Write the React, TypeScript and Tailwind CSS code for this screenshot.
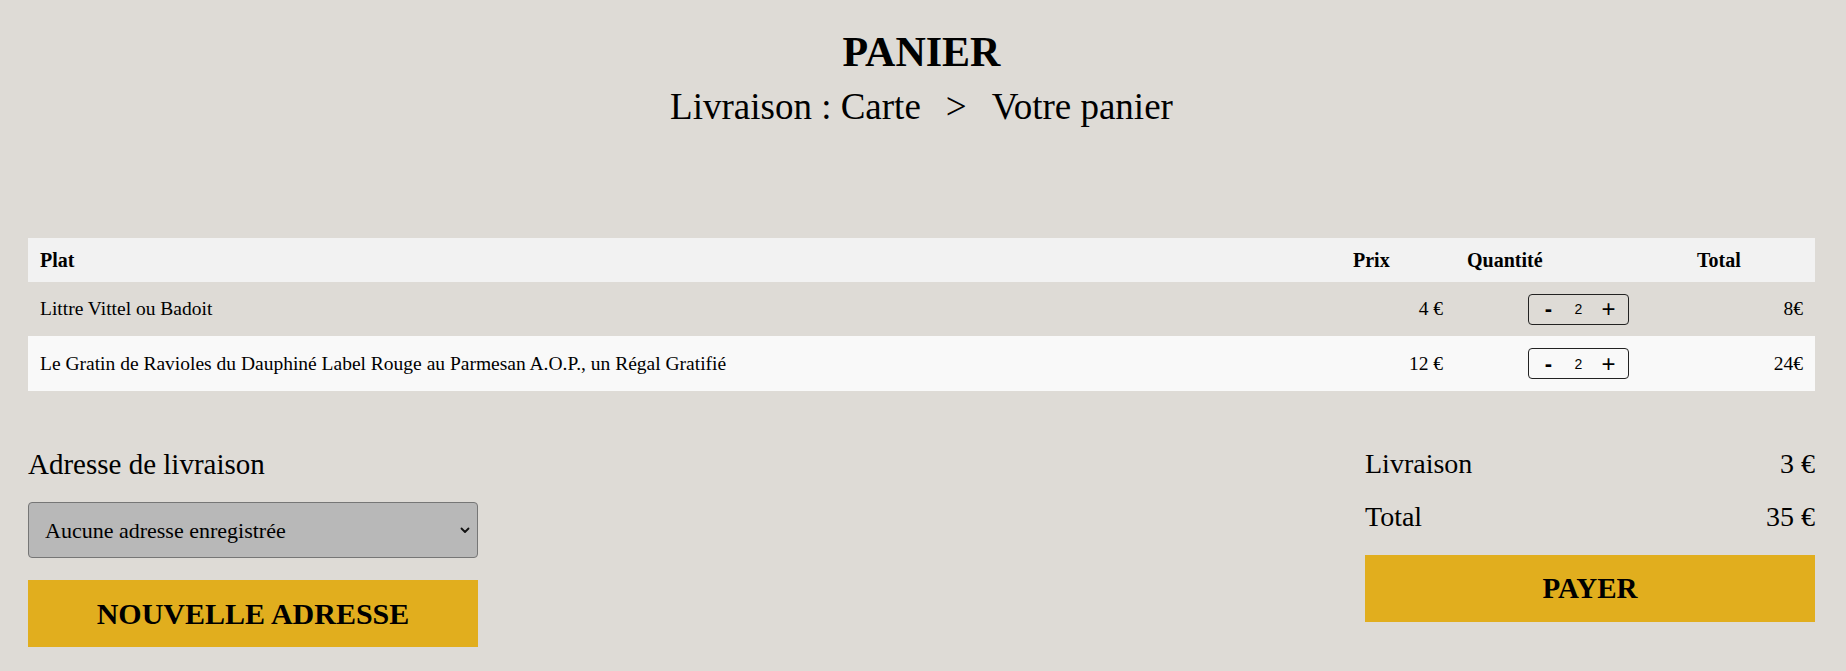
import { useState } from "react";

type Item = { name: string; price: number; qty: number };

const INITIAL: Item[] = [
  { name: "Littre Vittel ou Badoit", price: 4, qty: 2 },
  {
    name: "Le Gratin de Ravioles du Dauphiné Label Rouge au Parmesan A.O.P., un Régal Gratifié",
    price: 12,
    qty: 2,
  },
];

const DELIVERY = 3;

function QtyControl({ qty, onChange }: { qty: number; onChange: (n: number) => void }) {
  return (
    <div className="flex h-[31px] w-[101px] items-center justify-center rounded-[4px] border border-[#222] font-['Liberation_Sans',sans-serif]">
      <button
        onClick={() => onChange(Math.max(1, qty - 1))}
        className="flex w-[30px] items-center justify-center text-[22px] font-bold leading-none"
      >
        -
      </button>
      <span className="w-[30px] text-center text-[14px] leading-none">{qty}</span>
      <button
        onClick={() => onChange(qty + 1)}
        className="flex w-[30px] items-center justify-center text-[24px] leading-none"
      >
        +
      </button>
    </div>
  );
}

export default function App() {
  const [items, setItems] = useState<Item[]>(INITIAL);

  const subtotal = items.reduce((s, i) => s + i.price * i.qty, 0);

  const setQty = (idx: number, n: number) =>
    setItems((prev) => prev.map((it, i) => (i === idx ? { ...it, qty: n } : it)));

  return (
    <div className="min-h-screen bg-[#dedbd6] pl-[28px] pr-[31px] pt-[31px] font-['Liberation_Serif',serif] text-black">
      {/* Title */}
      <header className="text-center">
        <h1 className="text-[42px] font-bold leading-[42px]">PANIER</h1>
        <p className="mt-[14px] text-[37px] leading-[40px]">
          <span>Livraison : Carte</span>
          <span className="mx-[25px]">&gt;</span>
          <span>Votre panier</span>
        </p>
      </header>

      {/* Cart table */}
      <div className="mt-[111px]">
        <div className="grid h-[44px] grid-cols-[1fr_114px_230px_130px] items-center bg-[#f2f2f2] text-[20px] font-bold">
          <div className="px-[12px]">Plat</div>
          <div className="px-[12px]">Prix</div>
          <div className="px-[12px]">Quantité</div>
          <div className="px-[12px]">Total</div>
        </div>
        {items.map((item, idx) => (
          <div
            key={item.name}
            className={`grid grid-cols-[1fr_114px_230px_130px] items-center text-[19.5px] ${
              idx % 2 === 1 ? "h-[55px] bg-[#f9f9f9]" : "h-[54px]"
            }`}
          >
            <div className="px-[12px]">{item.name}</div>
            <div className="px-[12px] text-right">{item.price} €</div>
            <div className="flex pl-[73px]">
              <QtyControl qty={item.qty} onChange={(n) => setQty(idx, n)} />
            </div>
            <div className="px-[12px] text-right">{item.price * item.qty}€</div>
          </div>
        ))}
      </div>

      {/* Address + summary */}
      <div className="mt-[56px] flex justify-between">
        <div className="w-[450px]">
          <h2 className="text-[29px] leading-[34px]">Adresse de livraison</h2>
          <div className="relative mt-[21px]">
            <select className="h-[56px] w-full appearance-none rounded-[4px] border border-[#767676] bg-[#b8b8b8] pl-[16px] text-[22px] text-black outline-none">
              <option>Aucune adresse enregistrée</option>
            </select>
            <svg
              className="pointer-events-none absolute right-[8px] top-[25px]"
              width="10"
              height="7"
              viewBox="0 0 10 7"
              fill="none"
            >
              <path d="M1.5 1.5L5 5L8.5 1.5" stroke="#111" strokeWidth="1.8" strokeLinecap="round" strokeLinejoin="round" />
            </svg>
          </div>
          <button className="mt-[22px] h-[67px] w-full bg-[#e1ae1e] text-[30px] font-bold">
            NOUVELLE ADRESSE
          </button>
        </div>

        <div className="w-[450px]">
          <div className="flex justify-between text-[28px] leading-[34px]">
            <span>Livraison</span>
            <span>{DELIVERY} €</span>
          </div>
          <div className="mt-[19px] flex justify-between text-[28px] leading-[34px]">
            <span>Total</span>
            <span>{subtotal + DELIVERY} €</span>
          </div>
          <button className="mt-[21px] h-[67px] w-full bg-[#e1ae1e] text-[29px] font-bold">PAYER</button>
        </div>
      </div>
    </div>
  );
}
